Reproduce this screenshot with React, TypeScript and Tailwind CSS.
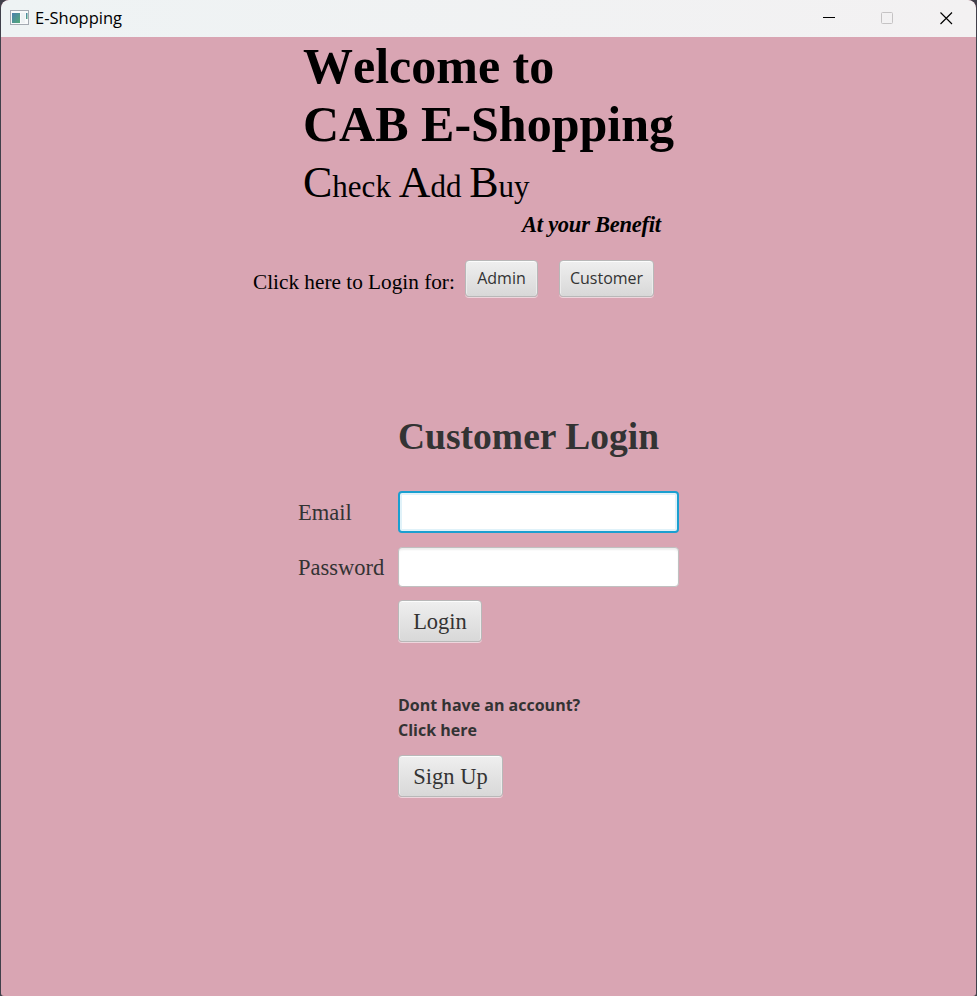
import React from "react";

const serif = "font-['Liberation_Serif','Times_New_Roman',serif]";
const sans = "font-['Open_Sans','Segoe_UI',sans-serif]";
const buttonBase =
  "flex items-center justify-center rounded-[4px] border border-[#b8b8b8] bg-gradient-to-b from-[#efefef] to-[#d8d8d8] text-[#333333] shadow-[0_1px_0_rgba(255,255,255,0.55),inset_0_1px_0_#fcfcfc,inset_1px_0_0_#ececec,inset_-1px_0_0_#ececec]";

function TitleBar() {
  return (
    <header className="flex h-[37px] shrink-0 items-center rounded-t-[8px] bg-gradient-to-r from-[#eef3f4] to-[#f3f1f2]">
      <svg className="ml-[9px] -mt-[2px] shrink-0" width="19" height="15" viewBox="0 0 19 15">
        <defs>
          <linearGradient id="pane" x1="0" y1="0" x2="1" y2="1">
            <stop offset="0" stopColor="#4a7fae" />
            <stop offset="1" stopColor="#53aa78" />
          </linearGradient>
        </defs>
        <rect x="0.5" y="0.5" width="18" height="14" fill="#f8fafb" stroke="#a4aab2" />
        <rect x="2" y="3" width="8" height="10" fill="url(#pane)" />
        <rect x="11" y="3" width="4" height="10" fill="#eef2f4" />
        <rect x="16" y="3" width="1.5" height="6" fill="url(#pane)" />
      </svg>
      <span className={`${sans} ml-[6px] -mt-[2px] text-[16.5px] leading-[20px] text-black`}>E-Shopping</span>
      <svg className="ml-auto mr-[22px] -mt-[2px]" width="131" height="14" viewBox="0 0 131 14" fill="none">
        <path d="M0 6.5H12" stroke="#000" />
        <rect x="58.5" y="1.5" width="11" height="11" rx="1" stroke="#c5c3c4" />
        <path d="M117.5 1.5L129 13M129 1.5L117.5 13" stroke="#000" strokeWidth="1.15" />
      </svg>
    </header>
  );
}

function Banner() {
  return (
    <section className={`${serif} ml-[303px] w-[380px] text-black [font-kerning:none]`}>
      <h1 className="text-[50px] font-bold leading-[58px] whitespace-nowrap">
        Welcome to
        <br />
        CAB E-Shopping
      </h1>
      <p className="h-[59px] pt-px text-[31px] leading-[58px] whitespace-nowrap">
        <span className="text-[44px]">C</span>heck <span className="text-[44px]">A</span>dd{" "}
        <span className="text-[44px]">B</span>uy
      </p>
      <p className="ml-[219px] text-[22.5px] font-bold italic leading-[26px] tracking-[-0.25px] whitespace-nowrap">
        At your Benefit
      </p>
    </section>
  );
}

function RoleChooser() {
  return (
    <section className="ml-[253px] mt-[22px] flex h-[38px]">
      <span className={`${serif} mt-[10px] w-[212px] text-[21.25px] leading-[24px] text-black`}>
        Click here to Login for:
      </span>
      <button className={`${buttonBase} ${sans} h-[37px] w-[73px] pb-[2px] text-[16px]`}>Admin</button>
      <button className={`${buttonBase} ${sans} ml-[21px] h-[37px] w-[95px] pb-[2px] text-[16px]`}>Customer</button>
    </section>
  );
}

function LoginForm() {
  return (
    <form className="ml-[298px] mt-[117px] text-[#333333]">
      <h2 className={`${serif} ml-[100px] text-[37.5px] font-bold leading-[44px] tracking-[0.02px]`}>
        Customer Login
      </h2>
      <div className="mt-[32px] flex h-[42px] items-center">
        <label className={`${serif} w-[100px] pt-[2px] text-[22.5px]`}>Email</label>
        <input className="h-[42px] w-[281px] rounded-[4px] border-2 border-[#1a9fd0] bg-white shadow-[inset_0_0_0_2px_#e0f2f9] outline-none" />
      </div>
      <div className="mt-[14px] flex h-[40px] items-center">
        <label className={`${serif} w-[100px] pt-[2px] text-[22.5px]`}>Password</label>
        <input
          type="password"
          className="h-[40px] w-[281px] rounded-[4px] border border-[#c0c0c0] bg-white shadow-[inset_0_2px_2px_#eeeeee] outline-none"
        />
      </div>
      <button
        type="button"
        className={`${buttonBase} ${serif} ml-[100px] mt-[13px] h-[42px] w-[84px] pt-px text-[22.5px]`}
      >
        Login
      </button>
      <p className={`${sans} ml-[100px] mt-[51px] text-[16px] font-bold leading-[25px]`}>
        Dont have an account?
        <br />
        Click here
      </p>
      <button
        type="button"
        className={`${buttonBase} ${serif} ml-[100px] mt-[12px] h-[42px] w-[105px] pt-px text-[22.5px]`}
      >
        Sign Up
      </button>
    </form>
  );
}

export default function App() {
  return (
    <div className="h-[996px] w-[977px] overflow-hidden bg-[#40404a] px-px">
      <main className="flex h-full flex-col overflow-hidden rounded-t-[8px] rounded-b-[3px] bg-[#d9a5b3]">
        <TitleBar />
        <div className="-ml-px">
          <Banner />
          <RoleChooser />
          <LoginForm />
        </div>
      </main>
    </div>
  );
}
